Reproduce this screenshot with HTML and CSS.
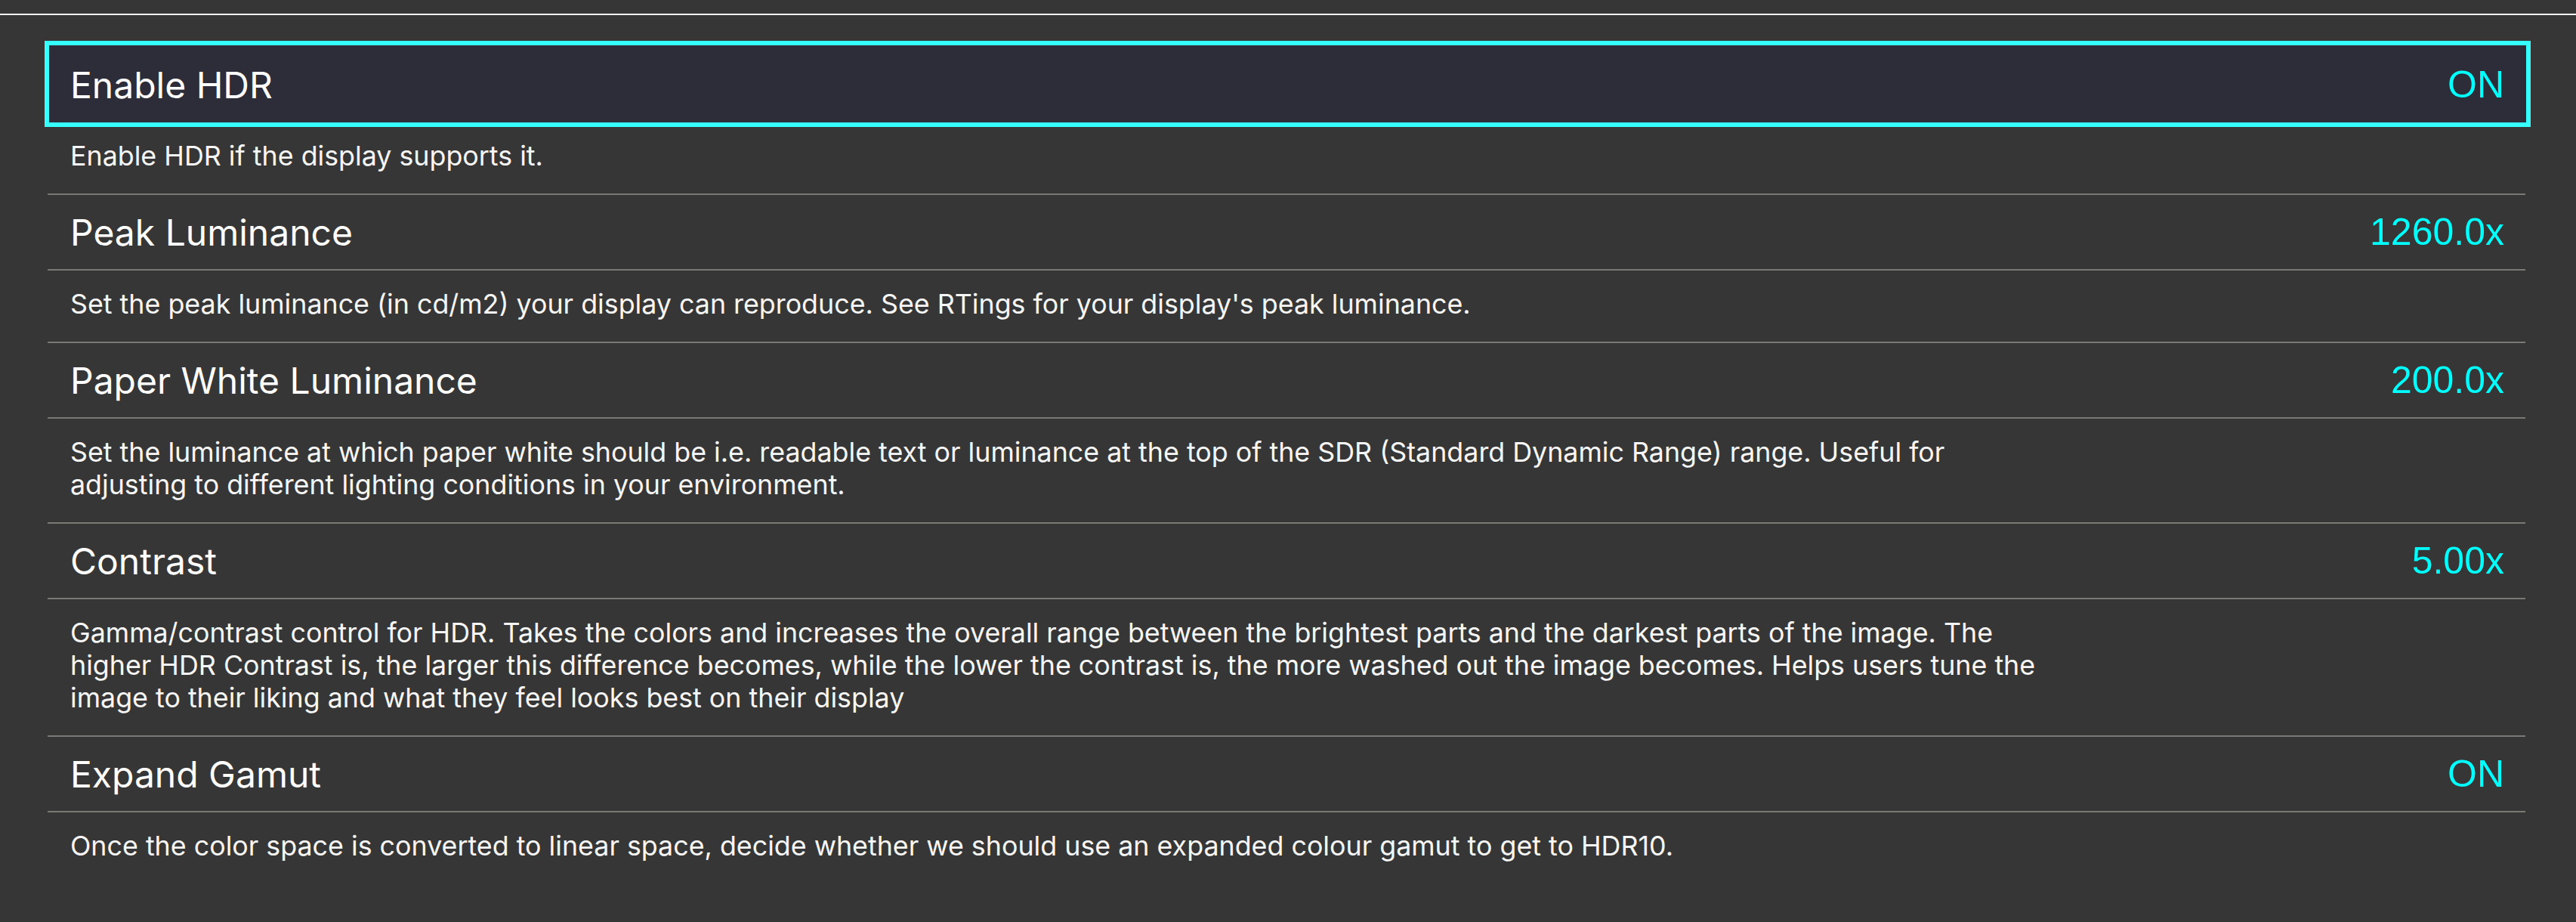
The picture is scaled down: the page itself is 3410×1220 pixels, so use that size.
FILE: index.html
```html
<!DOCTYPE html>
<html lang="en">
<head>
<meta charset="utf-8">
<title>HDR Settings</title>
<link rel="stylesheet" href="styles.css">
</head>
<body>
<div class="topline"></div>
<main class="settings">
  <div class="row title selected">
    <span class="label">Enable HDR</span>
    <span class="value">ON</span>
  </div>
  <div class="row desc">Enable HDR if the display supports it.</div>

  <div class="row title">
    <span class="label">Peak Luminance</span>
    <span class="value">1260.0x</span>
  </div>
  <div class="row desc">Set the peak luminance (in cd/m2) your display can reproduce. See RTings for your display's peak luminance.</div>

  <div class="row title">
    <span class="label">Paper White Luminance</span>
    <span class="value">200.0x</span>
  </div>
  <div class="row desc">Set the luminance at which paper white should be i.e. readable text or luminance at the top of the SDR (Standard Dynamic Range) range. Useful for adjusting to different lighting conditions in your environment.</div>

  <div class="row title">
    <span class="label">Contrast</span>
    <span class="value">5.00x</span>
  </div>
  <div class="row desc">Gamma/contrast control for HDR. Takes the colors and increases the overall range between the brightest parts and the darkest parts of the image. The higher HDR Contrast is, the larger this difference becomes, while the lower the contrast is, the more washed out the image becomes. Helps users tune the image to their liking and what they feel looks best on their display</div>

  <div class="row title">
    <span class="label">Expand Gamut</span>
    <span class="value">ON</span>
  </div>
  <div class="row desc">Once the color space is converted to linear space, decide whether we should use an expanded colour gamut to get to HDR10.</div>
</main>
</body>
</html>
```
FILE: styles.css
```css
html, body {
  margin: 0;
  padding: 0;
  background: #363636;
}

body {
  width: 3410px;
  height: 1220px;
  overflow: hidden;
  font-family: Inter, "Noto Sans", sans-serif;
  color: #ffffff;
}

.topline {
  height: 2px;
  margin-top: 18px;
  background: #f4f4f4;
}

.settings {
  margin: 40px 0 0 63px;
  width: 3280px;
  display: flex;
  flex-direction: column;
}

.row {
  border-top: 2px solid #7a7a75;
  padding-left: 30px;
  padding-right: 28px;
}

.title {
  height: 98px;
  display: flex;
  align-items: center;
  justify-content: space-between;
}

.label {
  font-size: 48px;
  font-weight: 400;
  color: #ffffff;
}

.value {
  font-family: "Liberation Sans", Arial, sans-serif;
  font-size: 50px;
  color: #00ffff;
}

.desc {
  font-size: 35.8px;
  line-height: 43px;
  padding-top: 23px;
  padding-bottom: 28px;
  padding-right: 621px;
  color: #f6f6f6;
}

.selected {
  position: relative;
  z-index: 1;
  height: 100px;
  margin: 0 -1px -2px 2px;
  padding-left: 28px;
  padding-right: 29px;
  border-top-color: #2c2d38;
  background: #2c2d38;
  outline: 6px solid #36ffff;
}
```
